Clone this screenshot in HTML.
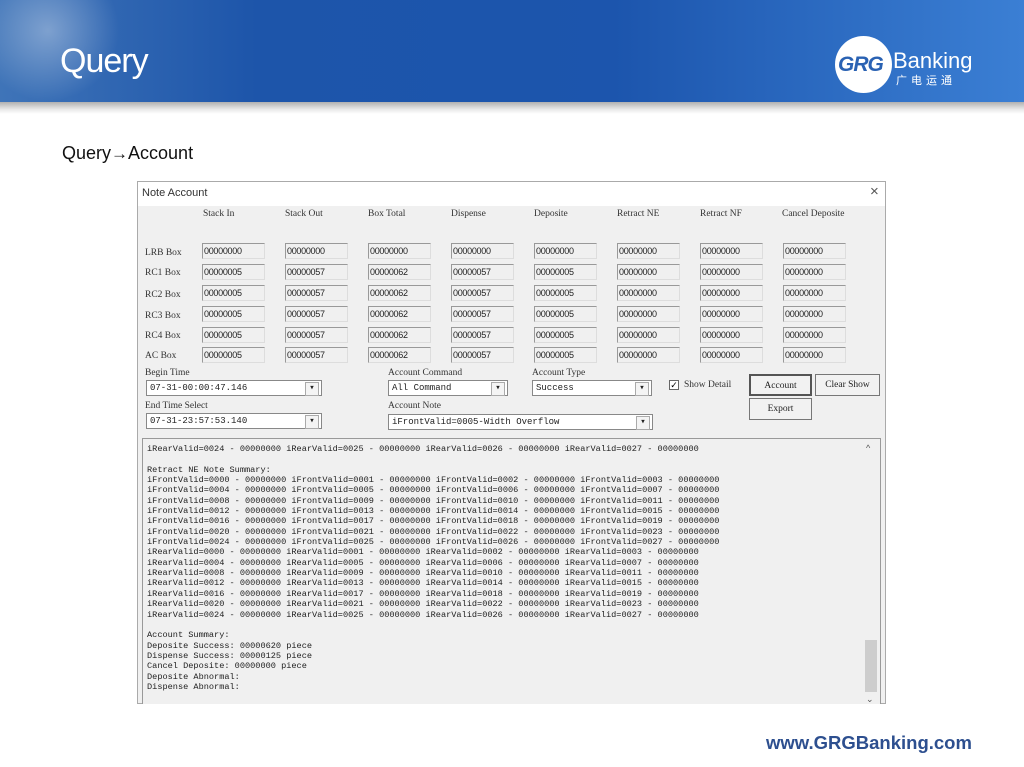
<!DOCTYPE html>
<html><head><meta charset="utf-8"><style>
*{margin:0;padding:0;box-sizing:border-box}
body{width:1024px;height:767px;background:#fff;position:relative;overflow:hidden;font-family:"Liberation Sans",sans-serif}
.a{position:absolute}
.hdr{left:0;top:0;width:1024px;height:102px;background:linear-gradient(90deg,#3f74b8 0%,#1d55aa 25%,#1c55ad 60%,#3b7fd4 100%)}
.shadow{left:0;top:102px;width:1024px;height:12px;background:linear-gradient(180deg,#b0b0b0,#e8e8e8 60%,#fff)}
.m{font-family:"Liberation Mono","Noto Sans CJK SC",monospace;font-size:8.6px;color:#222;white-space:pre}
.lbl{font-family:"Liberation Serif",serif;font-size:9.5px;color:#333;white-space:pre}
.box{width:63px;height:16px;border:1px solid #999;border-right-color:#ddd;border-bottom-color:#ddd;background:#f0f0f0;font-size:9px;color:#222;padding:2px 1px;font-family:"Liberation Sans",sans-serif;letter-spacing:-0.3px}
.cb{height:16px;background:#fff;border:1px solid #888;font-family:"Liberation Mono",monospace;font-size:9px;padding:2px 3px;color:#222}
.cb:after{content:"▾";position:absolute;right:2px;top:1px;width:12px;height:12px;border:1px solid #aaa;background:#f4f4f4;font-size:9px;text-align:center;line-height:11px}
.btn{height:22px;border:1px solid #777;background:#f2f2f2;font-family:"Liberation Serif",serif;font-size:9.5px;text-align:center;line-height:20px;color:#222}
</style></head><body>
<div class="a hdr"></div>
<div class="a" style="left:0;top:0;width:120px;height:102px;background:radial-gradient(ellipse at 40% 30%,rgba(255,255,255,.35),rgba(255,255,255,0) 70%)"></div>
<div class="a shadow"></div>
<div class="a" style="left:60px;top:42px;font-size:34px;color:#fff;letter-spacing:-1px">Query</div>
<div class="a" style="left:835px;top:36px;width:57px;height:57px;border-radius:50%;background:#fff"></div>
<div class="a" style="left:838px;top:53px;font-size:21px;font-weight:bold;font-style:italic;color:#2a62b3;letter-spacing:-1px">GRG</div>
<div class="a" style="left:893px;top:48px;font-size:22px;color:#fff">Banking</div>
<div class="a" style="left:896px;top:72px;font-size:11px;color:#fff;letter-spacing:4px;font-family:'Noto Sans CJK SC',sans-serif">广电运通</div>
<div class="a" style="left:62px;top:143px;font-size:18px;color:#111">Query<b style="font-size:17px">→</b>Account</div>

<div class="a" style="left:137px;top:181px;width:749px;height:523px;background:#f0f0f0;border:1px solid #aaa"></div>
<div class="a" style="left:138px;top:182px;width:747px;height:24px;background:#fff"></div>
<div class="a" style="left:142px;top:187px;font-size:11px;color:#333">Note Account</div>
<div class="a" style="left:870px;top:183px;font-size:15px;color:#555">×</div>

<div class="a lbl" style="left:203px;top:209px">Stack In</div>
<div class="a lbl" style="left:285px;top:209px">Stack Out</div>
<div class="a lbl" style="left:368px;top:209px">Box Total</div>
<div class="a lbl" style="left:451px;top:209px">Dispense</div>
<div class="a lbl" style="left:534px;top:209px">Deposite</div>
<div class="a lbl" style="left:617px;top:209px">Retract NE</div>
<div class="a lbl" style="left:700px;top:209px">Retract NF</div>
<div class="a lbl" style="left:782px;top:209px">Cancel Deposite</div>

<div class="a lbl" style="left:145px;top:248px">LRB Box</div>
<div class="a lbl" style="left:145px;top:268px">RC1 Box</div>
<div class="a lbl" style="left:145px;top:290px">RC2 Box</div>
<div class="a lbl" style="left:145px;top:311px">RC3 Box</div>
<div class="a lbl" style="left:145px;top:331px">RC4 Box</div>
<div class="a lbl" style="left:145px;top:351px">AC Box</div>

<div id="grid"></div>
<script>
var xs=[202,285,368,451,534,617,700,783],ys=[243,264,285,306,327,347];
var rows=[["00000000","00000000","00000000","00000000","00000000","00000000","00000000","00000000"]];
for(var i=0;i<5;i++)rows.push(["00000005","00000057","00000062","00000057","00000005","00000000","00000000","00000000"]);
var h="";for(var r=0;r<6;r++)for(var c=0;c<8;c++)h+='<div class="a box" style="left:'+xs[c]+'px;top:'+ys[r]+'px">'+rows[r][c]+'</div>';
document.getElementById("grid").innerHTML=h;
</script>

<div class="a lbl" style="left:145px;top:368px">Begin Time</div>
<div class="a cb" style="left:146px;top:380px;width:176px">07-31-00:00:47.146</div>
<div class="a lbl" style="left:145px;top:401px">End Time Select</div>
<div class="a cb" style="left:146px;top:413px;width:176px">07-31-23:57:53.140</div>
<div class="a lbl" style="left:388px;top:368px">Account Command</div>
<div class="a cb" style="left:388px;top:380px;width:120px">All Command</div>
<div class="a lbl" style="left:532px;top:368px">Account Type</div>
<div class="a cb" style="left:532px;top:380px;width:120px">Success</div>
<div class="a lbl" style="left:388px;top:401px">Account Note</div>
<div class="a cb" style="left:388px;top:414px;width:265px">iFrontValid=0005-Width Overflow</div>
<div class="a" style="left:669px;top:380px;width:10px;height:10px;border:1px solid #666;background:#fff;font-size:9px;line-height:8px;text-align:center">✓</div>
<div class="a lbl" style="left:684px;top:380px">Show Detail</div>
<div class="a btn" style="left:749px;top:374px;width:63px;border:2px solid #555">Account</div>
<div class="a btn" style="left:815px;top:374px;width:65px">Clear Show</div>
<div class="a btn" style="left:749px;top:398px;width:63px">Export</div>

<div class="a" style="left:142px;top:438px;width:739px;height:266px;border:1px solid #999;border-bottom:none;background:#f0f0f0"></div>
<div class="a" style="left:862px;top:440px;width:18px;height:264px;background:#f0f0f0"></div>
<div class="a" style="left:865px;top:640px;width:12px;height:52px;background:#cdcdcd"></div>
<div class="a" style="left:866px;top:443px;font-size:9px;color:#555">^</div>
<div class="a" style="left:866px;top:694px;font-size:9px;color:#555">⌄</div>
<div class="a m" id="log" style="left:147px;top:444px;line-height:10.35px"></div>
<script>
function p(n){return("000"+n).slice(-4)}
var L=["iRearValid=0024 - 00000000 iRearValid=0025 - 00000000 iRearValid=0026 - 00000000 iRearValid=0027 - 00000000","","Retract NE Note Summary:"];
["iFrontValid","iRearValid"].forEach(function(k){for(var s=0;s<28;s+=4){var t=[];for(var j=0;j<4;j++)t.push(k+"="+p(s+j)+" - 00000000");L.push(t.join(" "))}});
L=L.concat(["","Account Summary:","Deposite Success: 00000620 piece","Dispense Success: 00000125 piece","Cancel Deposite: 00000000 piece","Deposite Abnormal:","Dispense Abnormal:"]);
document.getElementById("log").textContent=L.join("\n");
</script>

<div class="a" style="left:766px;top:732px;font-size:18.5px;font-weight:bold;color:#2d4f8f">www.GRGBanking.com</div>
</body></html>
